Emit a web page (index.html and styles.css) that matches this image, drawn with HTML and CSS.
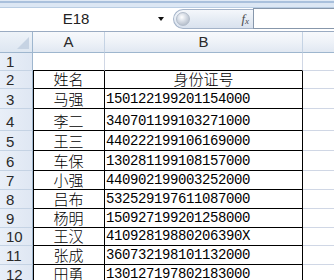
FILE: index.html
```html
<!DOCTYPE html>
<html>
<head>
<meta charset="utf-8">
<link rel="stylesheet" href="styles.css">
</head>
<body>
<div class="app">
  <div class="ribbon-edge"></div>
  <div class="formula-bar">
    <div class="name-box">E18</div>
    <div class="name-drop"><span class="tri"></span></div>
    <div class="fx-pill"><span class="orb"></span><span class="fx">f<sub>x</sub></span></div>
    <div class="formula-input"></div>
  </div>
  <div class="sheet">
    <div class="row head-row">
      <div class="rh corner"><span class="corner-tri"></span></div>
      <div class="ch col-a">A</div>
      <div class="ch col-b">B</div>
      <div class="ch col-c"></div>
    </div>
    <div class="row h18"><div class="rh">1</div><div class="c col-a bb"></div><div class="c col-b bb"></div><div class="c col-c"></div></div>
    <div class="row h18"><div class="rh">2</div><div class="c col-a box name">姓名</div><div class="c col-b box name">身份证号</div><div class="c col-c"></div></div>
    <div class="row h20"><div class="rh">3</div><div class="c col-a box name">马强</div><div class="c col-b box num">150122199201154000</div><div class="c col-c"></div></div>
    <div class="row h22"><div class="rh">4</div><div class="c col-a box name">李二</div><div class="c col-b box num">340701199103271000</div><div class="c col-c"></div></div>
    <div class="row h20"><div class="rh">5</div><div class="c col-a box name">王三</div><div class="c col-b box num">440222199106169000</div><div class="c col-c"></div></div>
    <div class="row h20"><div class="rh">6</div><div class="c col-a box name">车保</div><div class="c col-b box num">130281199108157000</div><div class="c col-c"></div></div>
    <div class="row h19"><div class="rh">7</div><div class="c col-a box name">小强</div><div class="c col-b box num">440902199003252000</div><div class="c col-c"></div></div>
    <div class="row h19"><div class="rh">8</div><div class="c col-a box name">吕布</div><div class="c col-b box num">532529197611087000</div><div class="c col-c"></div></div>
    <div class="row h19"><div class="rh">9</div><div class="c col-a box name">杨明</div><div class="c col-b box num">150927199201258000</div><div class="c col-c"></div></div>
    <div class="row h18"><div class="rh">10</div><div class="c col-a box name">王汉</div><div class="c col-b box num">41092819880206390X</div><div class="c col-c"></div></div>
    <div class="row h19"><div class="rh">11</div><div class="c col-a box name">张成</div><div class="c col-b box num">360732198101132000</div><div class="c col-c"></div></div>
    <div class="row h19"><div class="rh">12</div><div class="c col-a box name">田勇</div><div class="c col-b box num">130127197802183000</div><div class="c col-c"></div></div>
  </div>
</div>
</body>
</html>
```

FILE: styles.css
```css
* { box-sizing: border-box; }
html, body { margin: 0; padding: 0; background: #fff; }
.app { width: 334px; height: 280px; overflow: hidden; font-family: "Liberation Sans", Arial, sans-serif; }

.ribbon-edge {
  height: 8px;
  background: linear-gradient(to bottom, #dfe9f5 0, #dfe9f5 1px, #a9c0dc 1px, #a9c0dc 3px, #dce7f4 3px, #dce7f4 7px, #b9cde3 7px);
}

.formula-bar {
  display: flex;
  height: 24px;
  border-bottom: 1px solid #9aabc2;
  background: #fff;
}
.name-box {
  width: 152px;
  text-align: center;
  font-size: 15px;
  line-height: 22px;
  color: #222;
}
.name-drop {
  width: 21px;
  display: flex;
  align-items: center;
  justify-content: center;
  padding-right: 4px;
}
.tri {
  width: 0; height: 0;
  border-left: 3.5px solid transparent;
  border-right: 3.5px solid transparent;
  border-top: 4px solid #111;
  margin-top: -2px;
}
.fx-pill {
  width: 80px;
  height: 20px;
  margin-top: 1px;
  border: 1px solid #a4b3c8;
  border-right: none;
  border-radius: 10px 0 0 10px;
  background: linear-gradient(to bottom, #f4f7fb 0%, #e6ecf4 50%, #d9e2ee 100%);
  display: flex;
  align-items: center;
  justify-content: space-between;
  padding: 0 4px 0 2px;
}
.orb {
  width: 14px; height: 14px;
  border-radius: 50%;
  background: radial-gradient(circle at 40% 35%, #ffffff 0%, #d7dde6 40%, #a3adbb 100%);
  border: 1px solid #b3bdcb;
}
.fx {
  font-family: "Liberation Serif", "Times New Roman", serif;
  font-style: italic;
  font-size: 13px;
  color: #4a4a4a;
  line-height: 1;
}
.fx sub { font-size: 9px; vertical-align: -1px; }
.formula-input {
  flex: 1;
  height: 21px;
  border: 1px solid #8797ab;
  border-right: none;
  background: #fff;
}

.sheet { display: flex; flex-direction: column; }
.row { display: flex; }
.head-row { height: 21px; }
.h18 { height: 18px; }
.h19 { height: 19px; }
.h20 { height: 20px; }
.h22 { height: 22px; }

.rh {
  width: 33px;
  flex: none;
  background: linear-gradient(to right, #e9eff8, #dfe7f3);
  border-right: 1px solid #9eb6ce;
  border-bottom: 1px solid #c5d3e4;
  font-size: 15px;
  color: #2a2a2a;
  padding-left: 6px;
  display: flex;
  align-items: flex-end;
  line-height: 16px;
}
.corner {
  background: linear-gradient(to bottom, #eef3f9, #dde6f1);
  border-bottom: 1px solid #9eb6ce;
  position: relative;
}
.corner-tri {
  position: absolute;
  right: 3px; bottom: 3px;
  width: 0; height: 0;
  border-left: 12px solid transparent;
  border-bottom: 12px solid #c6d3e3;
}
.ch {
  flex: none;
  background: linear-gradient(to bottom, #f7f9fc 0%, #eef2f8 50%, #e1e8f2 100%);
  border-right: 1px solid #c5d3e4;
  border-bottom: 1px solid #9eb6ce;
  text-align: center;
  font-size: 15px;
  line-height: 20px;
  color: #2a2a2a;
}
.col-a { width: 72px; }
.col-b { width: 198px; }
.col-c { flex: 1; border-right: none; }

.c {
  flex: none;
  border-right: 1px solid #d0d7e5;
  border-bottom: 1px solid #d0d7e5;
  display: flex;
  align-items: flex-end;
  white-space: nowrap;
}
.c.col-c { flex: 1; border-right: none; }
.bb { border-bottom-color: #000; }
.box { border-bottom-color: #000; border-right-color: #000; }
.col-a.box { box-shadow: inset 1px 0 0 #000; }
.name {
  justify-content: center;
  font-family: "Noto Sans CJK SC", sans-serif;
  font-weight: 300;
  font-size: 15px;
  line-height: 16px;
  padding-bottom: 1px;
  color: #000;
}
.num {
  font-family: "Liberation Mono", "Courier New", monospace;
  font-size: 14px;
  letter-spacing: -0.4px;
  line-height: 15px;
  padding-left: 1px;
  padding-bottom: 1px;
  color: #000;
}
```
